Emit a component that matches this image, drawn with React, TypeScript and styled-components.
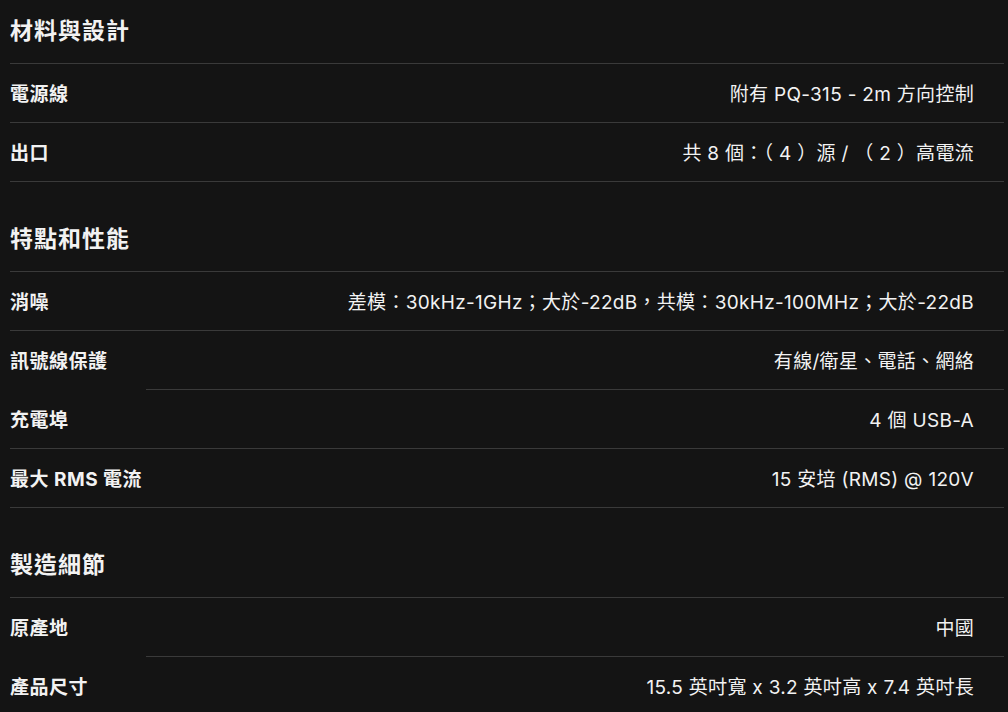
import React from 'react';
import styled, { createGlobalStyle } from 'styled-components';

const GlobalStyle = createGlobalStyle`
  html, body {
    margin: 0;
    padding: 0;
    background: #141414;
  }
  body {
    font-family: Inter, "Noto Sans CJK TC", "Noto Sans", sans-serif;
    color: #f2f2f2;
  }
`;

const Page = styled.div`
  padding: 0 4px 0 10px;
  min-height: 712px;
  box-sizing: border-box;
`;

const Section = styled.section`
  & + & {
    margin-top: 26px;
  }
`;

const SectionTitle = styled.h2`
  margin: 0;
  height: 64px;
  box-sizing: border-box;
  padding-bottom: 5px;
  display: flex;
  align-items: center;
  font-size: 23px;
  font-weight: 700;
  letter-spacing: 1px;
  border-bottom: 1px solid #3a3a3a;
`;

const Row = styled.div<{ $inset?: boolean; $last?: boolean }>`
  height: 59px;
  box-sizing: border-box;
  display: flex;
  align-items: center;
  justify-content: space-between;
  padding-right: 30px;
  padding-bottom: 3px;
  background: ${(p) =>
    p.$last
      ? 'none'
      : `linear-gradient(#3a3a3a, #3a3a3a) no-repeat right bottom / ${
          p.$inset ? 'calc(100% - 136px)' : '100%'
        } 1px`};
`;

const Label = styled.span`
  font-size: 19px;
  font-weight: 700;
  letter-spacing: 0.5px;
`;

const Value = styled.span`
  font-size: 19px;
  font-weight: 400;
  letter-spacing: 0.3px;
  text-align: right;
`;

type Spec = { label: string; value: string; inset?: boolean };

const sections: { title: string; rows: Spec[] }[] = [
  {
    title: '材料與設計',
    rows: [
      { label: '電源線', value: '附有 PQ-315 - 2m 方向控制' },
      { label: '出口', value: '共 8 個：（ 4 ）源 / （ 2 ）高電流' },
    ],
  },
  {
    title: '特點和性能',
    rows: [
      { label: '消噪', value: '差模：30kHz-1GHz；大於-22dB，共模：30kHz-100MHz；大於-22dB' },
      { label: '訊號線保護', value: '有線/衛星、電話、網絡', inset: true },
      { label: '充電埠', value: '4 個 USB-A' },
      { label: '最大 RMS 電流', value: '15 安培 (RMS) @ 120V' },
    ],
  },
  {
    title: '製造細節',
    rows: [
      { label: '原產地', value: '中國', inset: true },
      { label: '產品尺寸', value: '15.5 英吋寬 x 3.2 英吋高 x 7.4 英吋長' },
    ],
  },
];

const App: React.FC = () => {
  return (
    <>
      <GlobalStyle />
      <Page>
        {sections.map((section, si) => (
          <Section key={section.title}>
            <SectionTitle>{section.title}</SectionTitle>
            {section.rows.map((row, ri) => (
              <Row
                key={row.label}
                $inset={row.inset}
                $last={si === sections.length - 1 && ri === section.rows.length - 1}
              >
                <Label>{row.label}</Label>
                <Value>{row.value}</Value>
              </Row>
            ))}
          </Section>
        ))}
      </Page>
    </>
  );
};

export default App;
